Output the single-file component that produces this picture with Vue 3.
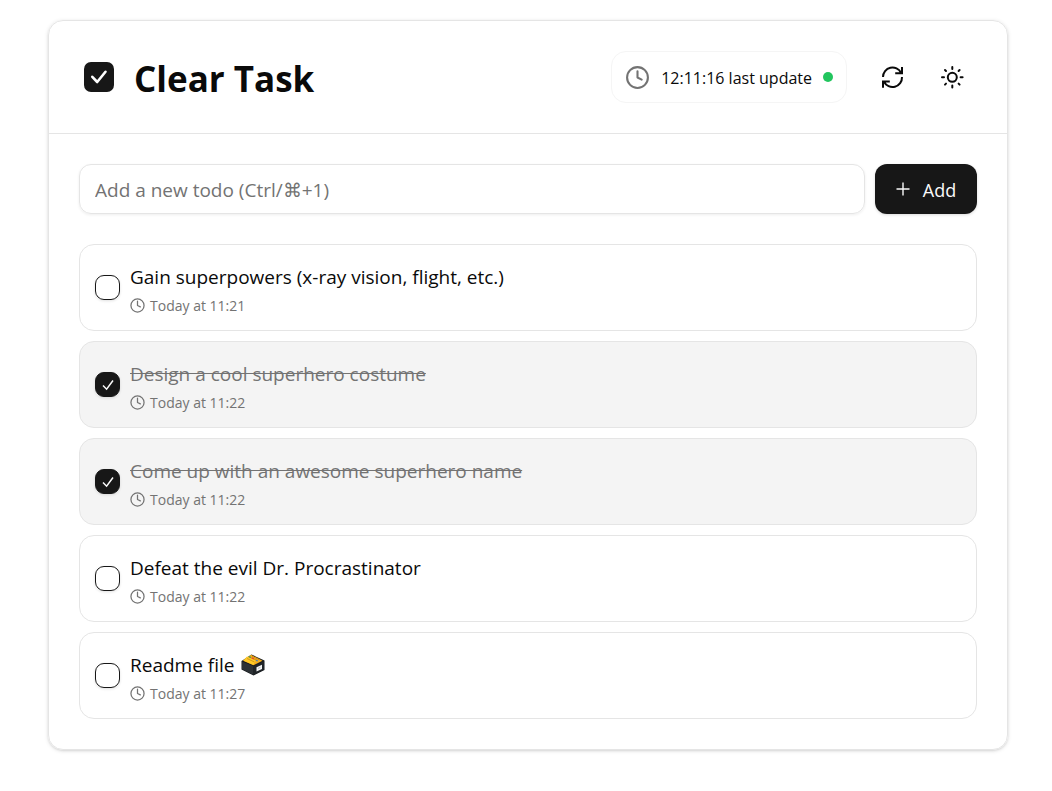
<script setup>
import { ref } from 'vue'

const draft = ref('')
const todos = ref([
  { id: 1, title: 'Gain superpowers (x-ray vision, flight, etc.)', time: 'Today at 11:21', done: false },
  { id: 2, title: 'Design a cool superhero costume', time: 'Today at 11:22', done: true },
  { id: 3, title: 'Come up with an awesome superhero name', time: 'Today at 11:22', done: true },
  { id: 4, title: 'Defeat the evil Dr. Procrastinator', time: 'Today at 11:22', done: false },
  { id: 5, title: 'Readme file', time: 'Today at 11:27', done: false, box: true },
])

function addTodo() {
  const title = draft.value.trim()
  if (!title) return
  const time = 'Today at ' + new Date().toTimeString().slice(0, 5)
  todos.value.push({ id: Date.now(), title, time, done: false })
  draft.value = ''
}
</script>

<template>
  <main class="page">
    <section class="card">
      <header class="header">
        <div class="brand">
          <svg class="logo" viewBox="0 0 30 30" aria-hidden="true">
            <rect width="30" height="30" rx="7" fill="#171717" />
            <path d="M8.3 14.8 13.2 20 21.5 9.8" fill="none" stroke="#fff" stroke-width="2.6" stroke-linecap="round" stroke-linejoin="round" />
          </svg>
          <h1 class="title">Clear Task</h1>
        </div>
        <div class="actions">
          <div class="status">
            <svg class="icon clock" viewBox="0 0 24 24" aria-hidden="true">
              <circle cx="12" cy="12" r="10" />
              <path d="M12 6v6l4 2" />
            </svg>
            <span class="status-text">12:11:16 last update</span>
            <span class="dot"></span>
          </div>
          <button class="icon-button" type="button" aria-label="Refresh">
            <svg class="refresh" viewBox="0 0 24 24" aria-hidden="true">
              <path d="M3 12A9.5 9.5 0 0 1 21 7.8M22 2v6.3h-6.8" />
              <path d="M22 12A9.5 9.5 0 0 1 4 16.7M3 22.8v-6.3h6.8" />
            </svg>
          </button>
          <button class="icon-button" type="button" aria-label="Toggle theme">
            <svg class="icon sun" viewBox="0 0 24 24" aria-hidden="true">
              <circle cx="12.3" cy="12.3" r="4.5" />
              <path d="M12.3 2v2M12.3 20.6v2M2 12.3h2M20.6 12.3h2M5 5l1 1M18.6 18.6l1 1M5 19.6l1-1M18.6 6l1-1" />
            </svg>
          </button>
        </div>
      </header>

      <div class="content">
        <form class="add-form" @submit.prevent="addTodo">
          <input v-model="draft" class="field" type="text" aria-label="New todo" placeholder="Add a new todo (Ctrl/⌘+1)" />
          <button class="add-button" type="submit">
            <svg class="plus" viewBox="0 0 14 14" aria-hidden="true">
              <path d="M7 0.5v13M0.5 7h13" />
            </svg>
            <span class="add-label">Add</span>
          </button>
        </form>

        <ul class="list">
          <li v-for="todo in todos" :key="todo.id" class="item" :class="{ done: todo.done }">
            <span class="check">
              <input :id="'todo-' + todo.id" v-model="todo.done" class="box" type="checkbox" />
              <svg v-if="todo.done" class="tick" viewBox="0 0 25 25" aria-hidden="true">
                <path d="M8 13.5 11.6 17.2 18 8.5" />
              </svg>
            </span>
            <div class="details">
              <label class="name" :for="'todo-' + todo.id">
                {{ todo.title }}
                <svg v-if="todo.box" class="file-box" viewBox="0 0 24 22" role="img" aria-label="Card file box">
                  <path d="M0.5 7 10.5 0.5 23.5 6.5V16L12.5 21.5 0.5 15.5Z" fill="#15181b" />
                  <path d="M1 7.5 12.5 12V21L1 15Z" fill="#2c3135" />
                  <path d="M12.5 12 23 7V15.6L12.5 21Z" fill="#202428" />
                  <path d="M2 6.8 10 0.8 21.5 6.8 12.5 11.2Z" fill="#f5ae1d" />
                  <path d="M2.4 6.6 6 2.4 14.8 6.6 12.5 11Z" fill="#ffc928" />
                  <path d="M6 4.5 13.5 8M8.5 3 16 6.4M11 2.2 18.5 5.8" fill="none" stroke="#b97811" stroke-width="0.6" />
                  <path d="M8 2.6 9.8 3.5" stroke="#4f9b52" stroke-width="1.4" />
                  <path d="M11 3.8 12.8 4.8" stroke="#e24832" stroke-width="1.4" />
                  <path d="M15 6.2 16.8 7" stroke="#427fc0" stroke-width="1.2" />
                  <path d="M15.5 13.2 21 10.8V15L15.5 17.5Z" fill="#f1f3f4" />
                  <path d="M17 14.5 19.4 13.4" stroke="#a7adb2" stroke-width="0.8" />
                </svg>
              </label>
              <div class="meta">
                <svg class="icon small-clock" viewBox="0 0 24 24" aria-hidden="true">
                  <circle cx="12" cy="12" r="10.5" />
                  <path d="M12 5v7l4.5 2.2" />
                </svg>
                <span>{{ todo.time }}</span>
              </div>
            </div>
          </li>
        </ul>
      </div>
    </section>
  </main>
</template>

<style>
body {
  margin: 0;
  background: #fff;
}
</style>

<style scoped>
.page {
  padding: 20px 20px 20px 24px;
  font-family: 'Segoe UI', 'Open Sans', 'Noto Sans', sans-serif;
  font-variant-ligatures: none;
  color: #0a0a0a;
}
.page * {
  box-sizing: border-box;
}
.card {
  max-width: 960px;
  margin: 0 auto;
  border: 1px solid #e5e5e5;
  border-radius: 15px;
  box-shadow: 0 1px 4px rgba(0, 0, 0, 0.12), 0 1px 2px rgba(0, 0, 0, 0.08);
}
.header {
  display: flex;
  align-items: center;
  justify-content: space-between;
  padding: 30px;
  border-bottom: 1px solid #e5e5e5;
}
.brand {
  display: flex;
  align-items: center;
  gap: 20px;
  padding-left: 5px;
}
.logo {
  width: 30px;
  height: 30px;
}
.title {
  margin: 0;
  padding-top: 4px;
  font-size: 35px;
  line-height: 44px;
  font-weight: 700;
}
.actions {
  display: flex;
  align-items: center;
  gap: 10px;
}
.status {
  display: flex;
  align-items: center;
  gap: 11px;
  height: 52px;
  margin-right: 10px;
  padding: 0 13px;
  border: 1px solid #f5f5f5;
  border-radius: 15px;
  font-size: 16px;
}
.status-text,
.add-label {
  padding-top: 2px;
}
.icon {
  fill: none;
  stroke: currentColor;
  stroke-width: 2;
  stroke-linecap: round;
  stroke-linejoin: round;
}
.clock {
  width: 25px;
  height: 25px;
  color: #737373;
}
.dot {
  width: 10px;
  height: 10px;
  border-radius: 50%;
  background: #22c55e;
}
.icon-button {
  display: grid;
  place-items: center;
  width: 50px;
  height: 50px;
  padding: 0;
  border: 0;
  border-radius: 12px;
  background: none;
  color: inherit;
  cursor: pointer;
}
.refresh,
.sun {
  width: 24px;
  height: 24px;
}
.refresh {
  fill: none;
  stroke: currentColor;
  stroke-width: 2;
}
.content {
  padding: 30px;
}
.add-form {
  display: flex;
  gap: 10px;
  margin-bottom: 30px;
}
.field {
  flex: 1;
  min-width: 0;
  height: 50px;
  padding: 2px 15px 0;
  border: 1px solid #e5e5e5;
  border-radius: 12px;
  background: none;
  box-shadow: 0 1px 3px rgba(0, 0, 0, 0.07);
  font: inherit;
  font-size: 19px;
  color: inherit;
}
.field::placeholder {
  color: #737373;
  opacity: 1;
}
.add-button {
  display: flex;
  align-items: center;
  justify-content: center;
  gap: 13px;
  width: 102px;
  height: 50px;
  padding: 0;
  border: 0;
  border-radius: 12px;
  background: #171717;
  box-shadow: 0 1px 3px rgba(0, 0, 0, 0.15);
  color: #fafafa;
  font: inherit;
  font-size: 18px;
  cursor: pointer;
}
.plus {
  width: 14px;
  height: 14px;
  fill: none;
  stroke: currentColor;
  stroke-width: 1.4;
}
.list {
  display: grid;
  gap: 10px;
  margin: 0;
  padding: 0;
  list-style: none;
}
.item {
  display: flex;
  align-items: center;
  gap: 10px;
  padding: 12px 15px;
  border: 1px solid #e5e5e5;
  border-radius: 15px;
}
.item.done {
  background: #f4f4f4;
}
.check {
  display: grid;
  flex: none;
}
.box {
  grid-area: 1 / 1;
  width: 25px;
  height: 25px;
  margin: 0;
  appearance: none;
  border: 1px solid #171717;
  border-radius: 9px;
  box-shadow: 0 1px 3px rgba(0, 0, 0, 0.12);
  cursor: pointer;
}
.box:checked {
  background: #171717;
}
.tick {
  grid-area: 1 / 1;
  width: 25px;
  height: 25px;
  fill: none;
  stroke: #fafafa;
  stroke-width: 1.5;
  pointer-events: none;
}
.details {
  min-width: 0;
  padding-top: 4px;
}
.name {
  display: flex;
  align-items: center;
  gap: 7px;
  font-size: 19px;
  line-height: 32px;
}
.done .name {
  color: #737373;
  text-decoration: line-through;
}
.file-box {
  width: 24px;
  height: 22px;
}
.meta {
  display: flex;
  align-items: center;
  gap: 5px;
  color: #737373;
  font-size: 14px;
  line-height: 25px;
}
.small-clock {
  width: 15px;
  height: 15px;
}
</style>
